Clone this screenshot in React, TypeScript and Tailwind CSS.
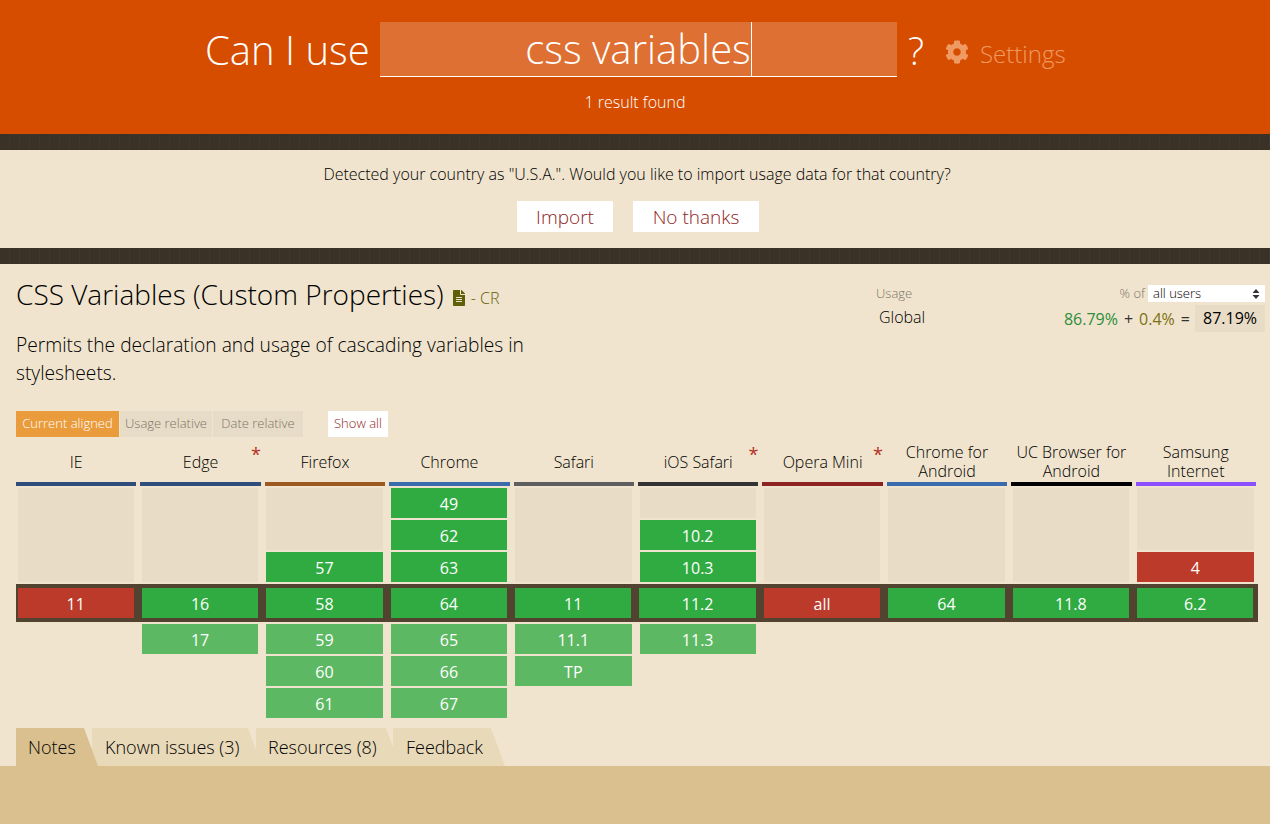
import React from 'react';
import { FaCog, FaFileAlt } from 'react-icons/fa';

type Cell = { label: string; kind: 'y' | 'n' };

const COLUMNS: {
  name: string;
  bar: string;
  note?: boolean;
  past: Cell[];
  current: Cell;
  future: string[];
}[] = [
  { name: 'IE', bar: 'bg-[#2f4e7c]', past: [], current: { label: '11', kind: 'n' }, future: [] },
  { name: 'Edge', bar: 'bg-[#2f4e7c]', note: true, past: [], current: { label: '16', kind: 'y' }, future: ['17'] },
  {
    name: 'Firefox',
    bar: 'bg-[#9c5a21]',
    past: [{ label: '57', kind: 'y' }],
    current: { label: '58', kind: 'y' },
    future: ['59', '60', '61'],
  },
  {
    name: 'Chrome',
    bar: 'bg-[#3a6cad]',
    past: [
      { label: '49', kind: 'y' },
      { label: '62', kind: 'y' },
      { label: '63', kind: 'y' },
    ],
    current: { label: '64', kind: 'y' },
    future: ['65', '66', '67'],
  },
  { name: 'Safari', bar: 'bg-[#5f5f5f]', past: [], current: { label: '11', kind: 'y' }, future: ['11.1', 'TP'] },
  {
    name: 'iOS Safari',
    bar: 'bg-[#333333]',
    note: true,
    past: [
      { label: '10.2', kind: 'y' },
      { label: '10.3', kind: 'y' },
    ],
    current: { label: '11.2', kind: 'y' },
    future: ['11.3'],
  },
  { name: 'Opera Mini', bar: 'bg-[#8e2222]', note: true, past: [], current: { label: 'all', kind: 'n' }, future: [] },
  { name: 'Chrome for Android', bar: 'bg-[#3a6cad]', past: [], current: { label: '64', kind: 'y' }, future: [] },
  { name: 'UC Browser for Android', bar: 'bg-black', past: [], current: { label: '11.8', kind: 'y' }, future: [] },
  {
    name: 'Samsung Internet',
    bar: 'bg-[#8c4fff]',
    past: [{ label: '4', kind: 'n' }],
    current: { label: '6.2', kind: 'y' },
    future: [],
  },
];

const stripe =
  'h-4 bg-[#3a3226] bg-[repeating-linear-gradient(90deg,#3a3226_0px,#3a3226_9px,#3f372a_9px,#3f372a_10px)]';

const cellBase = 'h-[30px] pt-[2px] flex items-center justify-center text-white text-[16px] font-normal';

function StatCell({ cell }: { cell: Cell }) {
  return <div className={`${cellBase} ${cell.kind === 'y' ? 'bg-[#30ab42]' : 'bg-[#bb3a2a]'}`}>{cell.label}</div>;
}

export default function App() {
  return (
    <div className="h-[824px] w-[1270px] overflow-hidden flex flex-col bg-[#f0e4ce] text-black font-[350] font-['Open_Sans',sans-serif]">
      {/* search header */}
      <div className="h-[134px] bg-[#d64d00] text-white pt-[22px]">
        <div className="flex items-center h-[55px] pl-[205px]">
          <span className="text-[40px] w-[175px] leading-none">Can I use</span>
          <div className="w-[517px] h-[55px] bg-white/20 border-b border-white flex justify-center items-center">
            <span className="text-[40px] leading-[54px] border-r border-white">css variables</span>
          </div>
          <span className="text-[38px] ml-[11px] w-[37px] leading-none">?</span>
          <FaCog className="text-[#f09a63] text-[24px] mt-[5px]" />
          <span className="text-[24px] text-[#f09a63] ml-[11px] mt-[8px]">Settings</span>
        </div>
        <div className="text-center text-[16px] mt-[13px]">1 result found</div>
      </div>
      <div className={stripe} />

      {/* country import notice */}
      <div className="h-[98px] pt-[13px] text-center">
        <div className="text-[16px] leading-[22px] pl-[4px]">Detected your country as "U.S.A.". Would you like to import usage data for that country?</div>
        <div className="flex justify-center gap-5 mt-[16px] pl-[6px]">
          <button className="w-[96px] h-[31px] pt-px bg-white text-[#8f1d1d] text-[19px]">Import</button>
          <button className="w-[126px] h-[31px] pt-px bg-white text-[#8f1d1d] text-[19px]">No thanks</button>
        </div>
      </div>
      <div className={stripe} />

      {/* feature info */}
      <div className="flex justify-between pl-4 pr-[5px] h-[147px]">
        <div className="w-[540px] pt-[10px]">
          <div className="flex items-center h-[40px]">
            <h1 className="text-[28px] leading-[40px]">CSS Variables (Custom Properties)</h1>
            <FaFileAlt className="text-[#5f5f08] text-[16px] ml-[7px] mt-[7px]" />
            <span className="text-[#5f5f08] text-[16px] ml-[4px] mt-[7px]">- CR</span>
          </div>
          <p className="text-[19.2px] leading-[28px] mt-[17px]">Permits the declaration and usage of cascading variables in stylesheets.</p>
        </div>
        <div className="w-[389px] pt-[21px]">
          <div className="flex justify-between items-center h-[17px]">
            <span className="text-[13px] text-[#7d7566]">Usage</span>
            <div className="flex items-center">
              <span className="text-[13px] text-[#7d7566] mr-[3px]">% of</span>
              <div className="w-[117px] h-[17px] bg-white flex items-center justify-between pl-[5px] pr-[5px] text-[13px] text-black">
                all users
                <svg width="8" height="12" viewBox="0 0 8 12" className="fill-[#333]">
                  <path d="M4 1 7.5 5H.5zM4 11 .5 7h7z" />
                </svg>
              </div>
            </div>
          </div>
          <div className="flex justify-between mt-[3px] h-[27px]">
            <span className="text-[16px] ml-[3px] leading-[24px]">Global</span>
            <div className="flex items-center text-[16px] font-normal">
              <span className="text-[#2c8d3c]">86.79%</span>
              <span className="text-[#333] mx-[6px]">+</span>
              <span className="text-[#7c7112]">0.4%</span>
              <span className="text-[#333] ml-[6px] mr-[5px]">=</span>
              <span className="bg-[#e8dcc7] h-[27px] leading-[27px] w-[70px] text-center">87.19%</span>
            </div>
          </div>
        </div>
      </div>

      {/* view mode buttons */}
      <div className="flex pl-4 h-[26px] text-[13px]">
        <div className="w-[103px] bg-[#ea9c3c] text-white flex items-center justify-center">Current aligned</div>
        <div className="w-[92px] ml-px bg-[#e7dcc7] text-[#7d7566] flex items-center justify-center">Usage relative</div>
        <div className="w-[90px] ml-px bg-[#e7dcc7] text-[#7d7566] flex items-center justify-center">Date relative</div>
        <div className="w-[60px] ml-[25px] bg-white text-[#8f1d1d] flex items-center justify-center">Show all</div>
      </div>

      {/* support table */}
      <div className="ml-4 w-[1244px] grid grid-cols-10 h-[45px] mt-[4px]">
        {COLUMNS.map(col => (
          <div key={col.name} className="relative pr-1 flex flex-col justify-end">
            <div className="flex-1 flex items-center justify-center text-center px-[4px] text-[16px] leading-[19px] pt-[1px]">
              {col.name}
            </div>
            {col.note && <span className="absolute right-[4px] top-[4px] text-[#b5301f] text-[18px] font-normal leading-[18px]">*</span>}
            <div className={`h-1 ${col.bar}`} />
          </div>
        ))}
      </div>

      <div className="ml-4 w-[1244px] grid grid-cols-10 h-[94px] mt-[2px]">
        {COLUMNS.map(col => (
          <div key={col.name} className="flex flex-col gap-[2px] pl-[1.5px] pr-[6.5px]">
            {col.past.length < 3 && <div className="flex-1 bg-[#e8dcc7]" />}
            {col.past.map(cell => (
              <StatCell key={cell.label} cell={cell} />
            ))}
          </div>
        ))}
      </div>

      <div className="ml-4 w-[1242px] h-[38px] mt-[2px] bg-[#51432f] grid grid-cols-[repeat(10,124.4px)] items-center">
        {COLUMNS.map(col => (
          <div key={col.name} className="pl-[1.5px] pr-[6.5px]">
            <StatCell cell={col.current} />
          </div>
        ))}
      </div>

      <div className="ml-4 w-[1244px] grid grid-cols-10 h-[94px] mt-[2px]">
        {COLUMNS.map(col => (
          <div key={col.name} className="flex flex-col gap-[2px] pl-[1.5px] pr-[6.5px]">
            {col.future.map(label => (
              <div key={label} className={`${cellBase} bg-[#5db863]`}>
                {label}
              </div>
            ))}
          </div>
        ))}
      </div>

      {/* notes tabs */}
      <div className="flex pl-4 h-[38px] mt-[10px] text-[18px]">
        <div className="relative z-10 w-[82px] pl-3 bg-[#dbc08f] leading-[38px] [clip-path:polygon(0_0,68px_0,100%_100%,0_100%)]">Notes</div>
        <div className="w-[170px] ml-[-6px] pl-[13px] bg-[#e8d9b9] leading-[38px] [clip-path:polygon(0_0,156px_0,100%_100%,0_100%)]">Known issues (3)</div>
        <div className="w-[144px] ml-[-6px] pl-[12px] bg-[#e8d9b9] leading-[38px] [clip-path:polygon(0_0,130px_0,100%_100%,0_100%)]">Resources (8)</div>
        <div className="w-[112px] ml-[-7px] pl-[13px] bg-[#e8d9b9] leading-[38px] [clip-path:polygon(0_0,98px_0,100%_100%,0_100%)]">Feedback</div>
      </div>
      <div className="flex-1 bg-[#dbc08f]" />
    </div>
  );
}
